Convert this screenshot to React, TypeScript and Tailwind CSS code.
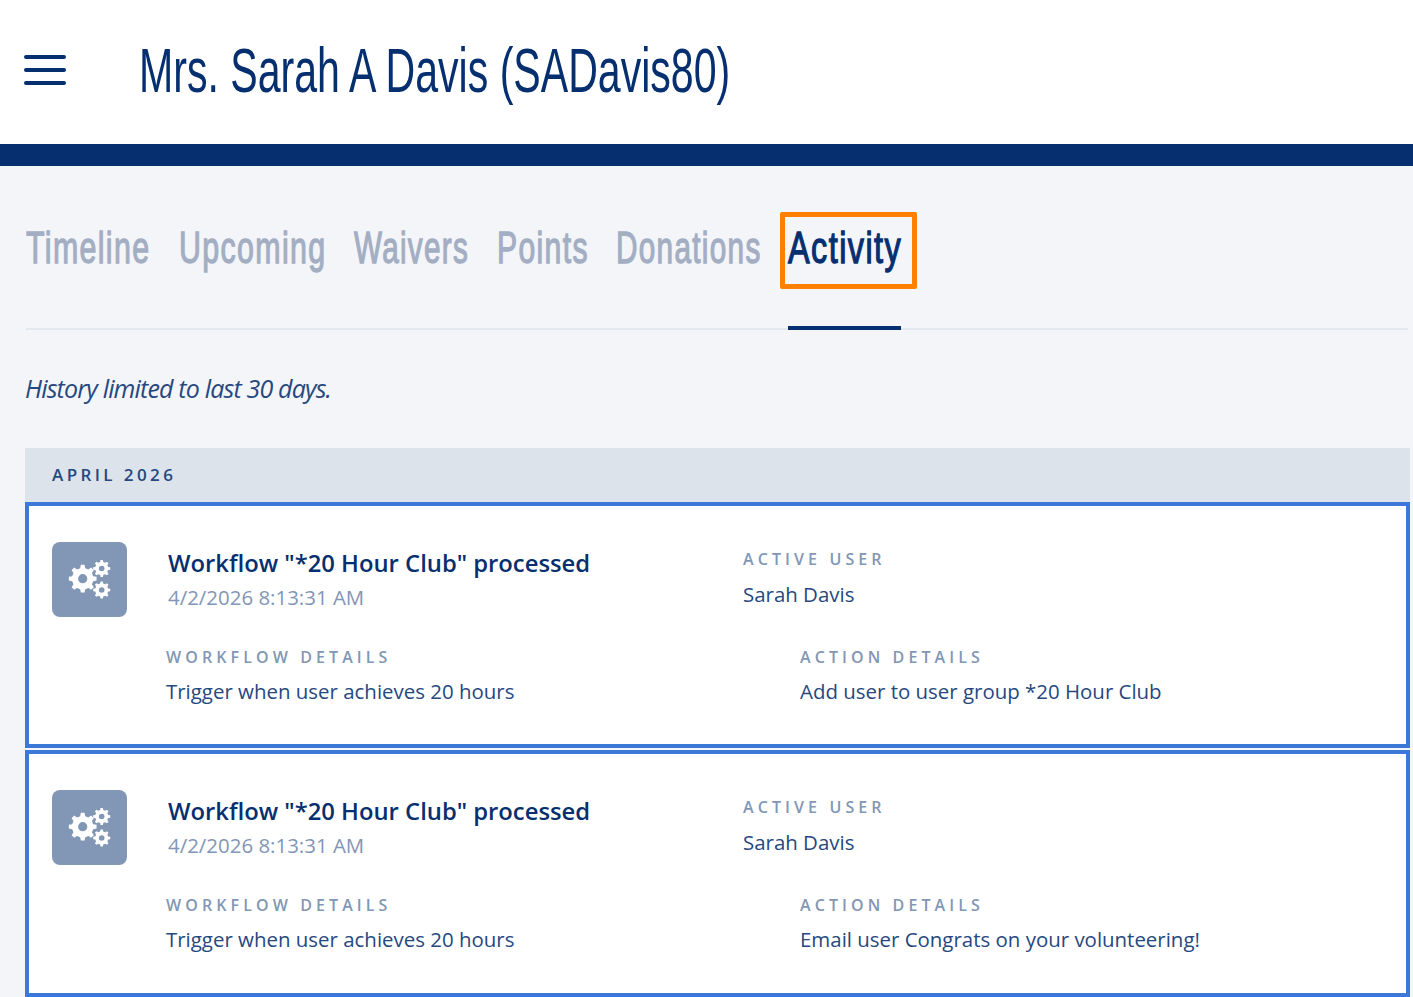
const tabs = [
  { label: 'Timeline', width: 'w-[125px]', scale: 'scale-x-[0.675]' },
  { label: 'Upcoming', width: 'w-[147px]', scale: 'scale-x-[0.675]' },
  { label: 'Waivers', width: 'w-[115px]', scale: 'scale-x-[0.658]' },
  { label: 'Points', width: 'w-[91px]', scale: 'scale-x-[0.67]' },
  { label: 'Donations', width: 'w-[144px]', scale: 'scale-x-[0.66]' },
]

const activity = [
  { action: 'Add user to user group *20 Hour Club' },
  { action: 'Email user Congrats on your volunteering!' },
]

const labelClass = 'text-[16px] leading-[22px] font-semibold tracking-[4.1px] text-[#8296b5] uppercase'
const valueClass = 'text-[20.45px] leading-[28px] text-[#26487f]'

function gearPath(cx: number, cy: number, outer: number, inner: number, hole: number, teeth: number) {
  const step = (Math.PI * 2) / teeth
  const pts: string[] = []
  for (let i = 0; i < teeth; i++) {
    const a = i * step
    const corners: [number, number][] = [
      [inner, a - step * 0.3],
      [outer, a - step * 0.17],
      [outer, a + step * 0.17],
      [inner, a + step * 0.3],
    ]
    corners.forEach(([r, t]) => pts.push(`${(cx + r * Math.cos(t)).toFixed(2)} ${(cy + r * Math.sin(t)).toFixed(2)}`))
  }
  const ring = `M${cx - hole} ${cy}a${hole} ${hole} 0 1 0 ${hole * 2} 0a${hole} ${hole} 0 1 0 ${-hole * 2} 0Z`
  return `M${pts.join('L')}Z${ring}`
}

function GearsIcon() {
  return (
    <svg viewBox="0 0 75 75" className="h-[75px] w-[75px] text-white" fill="currentColor" fillRule="evenodd">
      <path d={gearPath(30.7, 36.7, 14, 10.8, 4.6, 8)} />
      <path d={gearPath(49.7, 26.5, 8.6, 6.6, 2.8, 8)} />
      <path d={gearPath(49.7, 48, 8.6, 6.6, 2.8, 8)} />
    </svg>
  )
}

function ActivityCard({ action }: { action: string }) {
  return (
    <div className="h-[246px] border-4 border-[#3c78d8] bg-white pt-[36px] last:h-[247px]">
      <div className="flex h-[75px]">
        <div className="ml-[23px] h-[75px] w-[75px] rounded-lg bg-[#8296b5]">
          <GearsIcon />
        </div>
        <div className="ml-[41px] w-[575px] pt-[4px]">
          <div className="text-[23.8px] leading-[34px] font-semibold text-[#062f6f]">Workflow "*20 Hour Club" processed</div>
          <div className="mt-[2px] text-[20.45px] leading-[30px] text-[#8296b5]">4/2/2026 8:13:31 AM</div>
        </div>
        <div className="pt-[6px]">
          <div className={labelClass}>Active User</div>
          <div className={`mt-[10px] ${valueClass}`}>Sarah Davis</div>
        </div>
      </div>
      <div className="mt-[29px] flex">
        <div className="ml-[137px] w-[634px]">
          <div className={labelClass}>Workflow Details</div>
          <div className={`mt-[9px] ${valueClass}`}>Trigger when user achieves 20 hours</div>
        </div>
        <div>
          <div className={labelClass}>Action Details</div>
          <div className={`mt-[9px] ${valueClass}`}>{action}</div>
        </div>
      </div>
    </div>
  )
}

export default function App() {
  return (
    <div className="h-[997px] w-[1413px] overflow-hidden bg-[#f3f5f9] font-['Open_Sans',sans-serif]">
      <header className="flex h-[144px] items-center bg-white">
        <div className="mb-[4px] ml-[24px] flex w-[42px] flex-col gap-[9.5px]">
          <span className="h-[3.5px] rounded-full bg-[#062f6f]" />
          <span className="h-[3.5px] rounded-full bg-[#062f6f]" />
          <span className="h-[3.5px] rounded-full bg-[#062f6f]" />
        </div>
        <h1 className="mb-[3px] ml-[73px] origin-left scale-x-[0.652] font-['Liberation_Sans',sans-serif] text-[63px] leading-none font-normal whitespace-nowrap text-[#062f6f]">
          Mrs. Sarah A Davis (SADavis80)
        </h1>
      </header>
      <div className="h-[22px] bg-[#062f6f]" />

      <nav className="mt-[46px] mr-[5px] ml-[26px] flex h-[118px] items-start gap-[28px] border-b-2 border-[#e3e7ee] font-['Liberation_Sans',sans-serif] text-[45px] leading-[72px] font-normal tracking-[2px] [-webkit-text-stroke:1.3px_currentColor]">
        {tabs.map((tab) => (
          <span key={tab.label} className={`${tab.width} whitespace-nowrap text-[#a3aec3]`}>
            <span className={`inline-block origin-left ${tab.scale}`}>{tab.label}</span>
          </span>
        ))}
        <span className="relative h-[118px] w-[113px] border-b-4 border-[#062f6f] whitespace-nowrap text-[#062f6f]">
          <span className="inline-block origin-left scale-x-[0.72]">Activity</span>
          <span className="absolute top-0 -left-[8px] h-[77px] w-[137px] rounded-[2px] border-[5px] border-[#ff8000]" />
        </span>
      </nav>

      <p className="mt-[42px] ml-[25px] text-[25px] leading-[32px] tracking-[-0.83px] text-[#26487f] italic">History limited to last 30 days.</p>

      <section className="mt-[44px] ml-[25px] w-[1385px]">
        <div className="flex h-[54px] items-center bg-[#dce3eb] pl-[27px] text-[17px] font-semibold tracking-[0.2em] text-[#26487f]">APRIL 2026</div>
        <div className="flex flex-col gap-[2px]">
          {activity.map((item) => (
            <ActivityCard key={item.action} action={item.action} />
          ))}
        </div>
      </section>
    </div>
  )
}
